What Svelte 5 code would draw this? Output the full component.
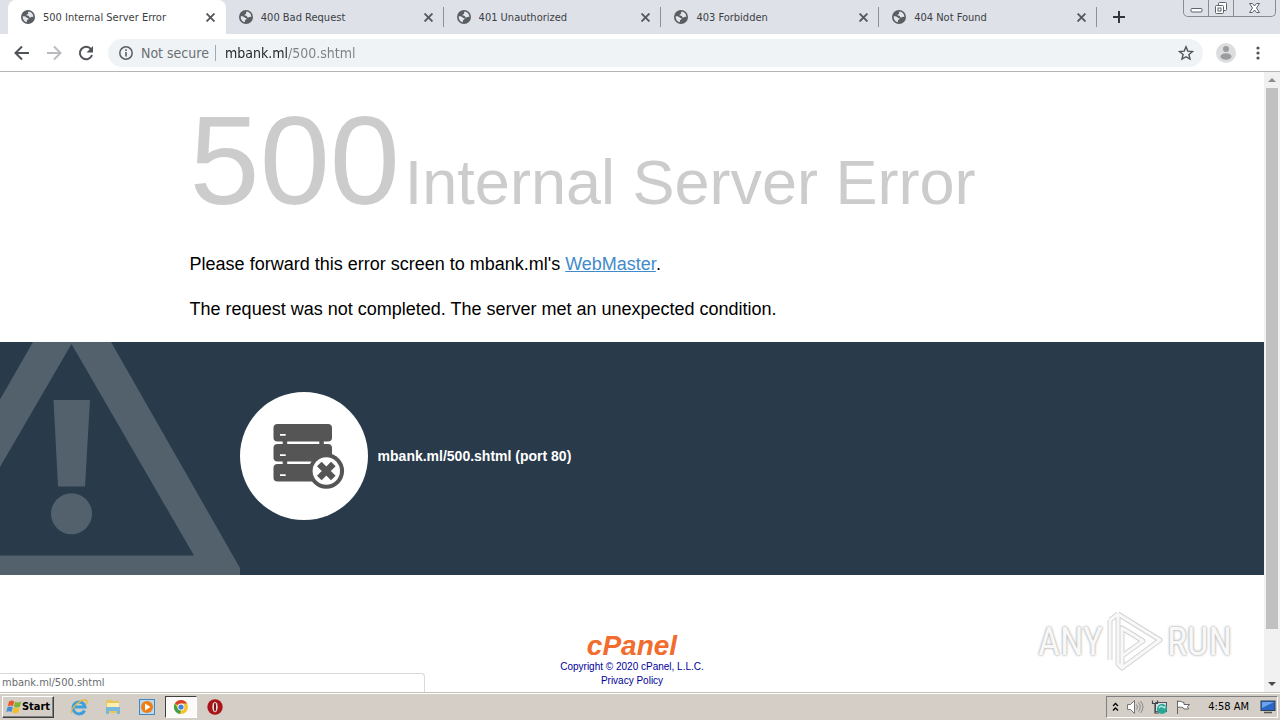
<script lang="ts">
interface Tab {
	title: string;
	active?: boolean;
}

const tabs: Tab[] = [
	{ title: '500 Internal Server Error', active: true },
	{ title: '400 Bad Request' },
	{ title: '401 Unauthorized' },
	{ title: '403 Forbidden' },
	{ title: '404 Not Found' },
];

let url = $state('mbank.ml/500.shtml');
</script>

<div class="desktop">
	<header class="tab-strip">
		<div class="tabs">
			{#each tabs as tab}
				<div class="tab" class:active={tab.active}>
					<svg class="globe" viewBox="0 0 14 14" aria-hidden="true">
						<circle cx="7" cy="7" r="7" fill="#5a5e63" />
						<path d="M8 1.6C6.8 2 6.6 3 7.4 3.5c-.6 1-1.7.6-1.9 1.6.1.9 1.3.7 2.2.8.6.8.3 1.5 1.3 1.6 1 .1 1-.9 2-.8l1.4.4C12.3 4.3 10.5 2 8 1.6z" fill="#e4e6ea" />
						<path d="M1.7 6.2c1.5-.2 3 .2 4 1.3.5.8 1.7.4 2 1.3-.1.9-1.2.8-1.6 1.5-.2.7 0 1.3-.6 1.9C3.3 11.5 1.5 9.3 1.7 6.2z" fill="#e4e6ea" />
					</svg>
					<span class="tab-title">{tab.title}</span>
					<button class="tab-close" aria-label="Close {tab.title}">
						<svg viewBox="0 0 8 8"><path d="M0.5 0.5l7 7M7.5 0.5l-7 7" stroke="#55595e" stroke-width="1.7" /></svg>
					</button>
				</div>
			{/each}
		</div>
		<button class="new-tab" aria-label="New tab">
			<svg viewBox="0 0 12 12"><path d="M6 0v12M0 6h12" stroke="#33363b" stroke-width="2" /></svg>
		</button>
		<div class="window-buttons">
			<button aria-label="Minimize">
				<svg width="13" height="16" viewBox="0 0 13 16"><rect x="1" y="8.5" width="11" height="3.5" rx="1" fill="#fff" stroke="#5d636b" /></svg>
			</button>
			<button aria-label="Restore">
				<svg width="14" height="16" viewBox="0 0 14 16" fill="#fff" stroke="#5d636b">
					<rect x="4.5" y="2.5" width="8" height="8" rx="1" />
					<rect x="1.5" y="5.5" width="8" height="8" rx="1" />
					<rect x="4" y="8" width="3" height="3" />
				</svg>
			</button>
			<button class="wide" aria-label="Close">
				<svg width="13" height="16" viewBox="0 0 13 16"><path d="M1.5 3.5h3l2 2.5 2-2.5h3L8.5 8l3 4.5h-3l-2-2.5-2 2.5h-3L4.5 8z" fill="#fff" stroke="#5d636b" /></svg>
			</button>
		</div>
	</header>

	<div class="toolbar">
		<button class="nav" aria-label="Back">
			<svg viewBox="0 0 16 16"><path d="M15 8H2M8 1.5L1.5 8L8 14.5" fill="none" stroke="#505458" stroke-width="2" /></svg>
		</button>
		<button class="nav" aria-label="Forward" disabled>
			<svg viewBox="0 0 16 16"><path d="M1 8h13M8 1.5L14.5 8L8 14.5" fill="none" stroke="#b9bbbe" stroke-width="2" /></svg>
		</button>
		<button class="nav" aria-label="Reload">
			<svg viewBox="0 0 16 16">
				<path d="M13 4.2A6.2 6.2 0 1 0 14 10" fill="none" stroke="#505458" stroke-width="2" />
				<path d="M15 1v6.5H8.5z" fill="#505458" />
			</svg>
		</button>
		<div class="omnibox">
			<svg class="info" viewBox="0 0 14 14" aria-hidden="true">
				<circle cx="7" cy="7" r="6.2" fill="none" stroke="#5a5e63" stroke-width="1.5" />
				<path d="M7 6v4.5M7 3.3v1.6" stroke="#5a5e63" stroke-width="1.6" />
			</svg>
			<span class="security">Not secure</span>
			<input type="text" aria-label="Address" spellcheck="false" bind:value={url} />
			<button class="star" aria-label="Bookmark this page">
				<svg viewBox="0 0 16 16"><path d="M8 1.8l1.8 4.3 4.7.4-3.6 3 1.1 4.6L8 11.7l-4 2.4 1.1-4.6-3.6-3 4.7-.4z" fill="none" stroke="#505458" stroke-width="1.4" /></svg>
			</button>
		</div>
		<button class="profile" aria-label="Profile">
			<svg viewBox="0 0 20 20">
				<circle cx="10" cy="10" r="10" fill="#dcdddf" />
				<circle cx="10" cy="6" r="3" fill="#9b9c9e" />
				<ellipse cx="10" cy="13.5" rx="5.5" ry="3.2" fill="#9b9c9e" />
			</svg>
		</button>
		<button class="menu" aria-label="Menu">
			<svg viewBox="0 0 4 14" fill="#505458"><circle cx="2" cy="2" r="1.6" /><circle cx="2" cy="7" r="1.6" /><circle cx="2" cy="12" r="1.6" /></svg>
		</button>
	</div>

	<div class="viewport">
		<main class="page">
			<div class="container">
				<h1><span class="code">500</span><span class="reason">Internal Server Error</span></h1>
				<p>Please forward this error screen to mbank.ml's <a href="mailto:webmaster@mbank.ml">WebMaster</a>.</p>
				<p>The request was not completed. The server met an unexpected condition.</p>
			</div>

			<section class="banner">
				<svg class="warning" viewBox="0 0 240 233" fill="#53616d" aria-hidden="true">
					<path d="M33 0H111L240 226V233H0V213.5H194L71.5 2L0 125V57.5z" />
					<path d="M53.5 58H90L85 144.5H58z" />
					<circle cx="71.5" cy="171.7" r="20.5" />
				</svg>
				<div class="container server">
					<svg class="server-icon" viewBox="0 0 128 128" aria-hidden="true">
						<circle cx="64" cy="64" r="64" fill="#fff" />
						<g fill="#555">
							<rect x="33.5" y="32" width="58.5" height="17.5" rx="4" />
							<rect x="33.5" y="52" width="58.5" height="17.5" rx="4" />
							<rect x="33.5" y="72" width="58.5" height="17.5" rx="4" />
							<path d="M42.7 48h4.5v26h-4.5zM79.3 48h4.5v26h-4.5z" />
							<circle cx="86.3" cy="79" r="17.8" />
						</g>
						<path d="M40 42h5.7v1.7H40zM40 62.3h5.7V64H40zM40 82.3h5.7V84H40z" fill="#fff" />
						<circle cx="86.3" cy="79" r="13.7" fill="#fff" />
						<path d="M79.3 72l14 14M93.3 72l-14 14" stroke="#555" stroke-width="6.5" />
					</svg>
					<strong>mbank.ml/500.shtml (port 80)</strong>
				</div>
			</section>

			<footer>
				<a class="logo" href="https://cpanel.com/">cPanel</a>
				<a href="https://cpanel.com/">Copyright © 2020 cPanel, L.L.C.</a>
				<a href="https://cpanel.com/privacy">Privacy Policy</a>
			</footer>
		</main>

		<div class="scrollbar">
			<button aria-label="Scroll up"><svg viewBox="0 0 8 4"><path d="M0 4L4 0L8 4z" fill="#8b8b8b" /></svg></button>
			<div class="track"><div class="thumb"></div></div>
			<button aria-label="Scroll down"><svg viewBox="0 0 8 4"><path d="M0 0h8L4 4z" fill="#4b4b4b" /></svg></button>
		</div>

		<div class="status">mbank.ml/500.shtml</div>

		<div class="watermark">
			<span>ANY</span>
			<svg viewBox="0 0 60 64" aria-hidden="true">
				<g fill="none" stroke-linejoin="round">
					<path d="M13 4L55 30L17 58V46L38 31L17 18V46M13 4V54L17 58M5 10V50M5 10L13 4" stroke="#d4d4d4" stroke-width="5" />
					<path d="M13 4L55 30L17 58V46L38 31L17 18V46M13 4V54L17 58M5 10V50M5 10L13 4" stroke="#f8f8f8" stroke-width="3" />
				</g>
			</svg>
			<span>RUN</span>
		</div>
	</div>

	<nav class="taskbar">
		<button class="start">
			<svg viewBox="0 0 16 16" aria-hidden="true">
				<path d="M3 2.5C5 1 7 1.5 8.2 2.5L7 7.3C5.5 6.3 3.6 6.3 1.8 7.3z" fill="#e8582a" />
				<path d="M9 2.8c1.8 1.2 4 1 6.2-.2L14 7.5c-2 1.2-4 1.2-6 .2z" fill="#7ab536" />
				<path d="M1.5 8.2C3.4 7.2 5.2 7.3 6.8 8.2L5.5 13C4 12 2 12 .3 13z" fill="#3f8ed8" />
				<path d="M7.7 8.6c2 1 4 1 6-.2l-1.3 4.9c-2 1.2-4 1.2-6 .1z" fill="#f6bd28" />
			</svg>
			Start
		</button>
		<div class="launchers">
			<button aria-label="Internet Explorer">
				<svg viewBox="0 0 18 18" fill="none">
					<path d="M14.5 12.5A6 6 0 1 1 15 9H5" stroke="#3d9fdd" stroke-width="3" />
					<path d="M2 15C-1 12 9 2 15 2c3 0 2 3 1 4.5" stroke="#e9b93c" stroke-width="1.3" />
				</svg>
			</button>
			<button aria-label="Windows Explorer">
				<svg viewBox="0 0 18 18">
					<path d="M2 4l1-2h5l1 1h6v12H2z" fill="#e8c65b" />
					<path d="M3 5h12v6H3z" fill="#fbeeb0" />
					<path d="M2 9h14v7h-3v-3H5v3H2z" fill="#79b7dc" />
				</svg>
			</button>
			<button aria-label="Media Player">
				<svg viewBox="0 0 18 18">
					<rect x="1.5" y="1.5" width="15" height="15" fill="#b7d9f2" stroke="#4488c0" />
					<circle cx="9" cy="9" r="6" fill="#ef7d12" />
					<path d="M7 5.5L12.5 9L7 12.5z" fill="#fff" />
				</svg>
			</button>
			<button class="pressed" aria-label="Chrome">
				<svg viewBox="0 0 18 18">
					<circle cx="9" cy="9" r="7" fill="#f3c52b" />
					<path d="M9 9L2.9 5.5A7 7 0 0 1 15.1 5.5H9z" fill="#d9402f" />
					<path d="M2.9 5.5L6 11L9 12l-1 4A7 7 0 0 1 2.9 5.5z" fill="#3f9f4b" />
					<circle cx="9" cy="9" r="3.4" fill="#fff" />
					<circle cx="9" cy="9" r="2.6" fill="#427fdd" />
				</svg>
			</button>
			<button aria-label="Opera">
				<svg viewBox="0 0 18 18">
					<circle cx="9" cy="9" r="7.7" fill="#a81418" />
					<ellipse cx="9" cy="9" rx="2.7" ry="5.3" fill="#e9dcdc" />
					<ellipse cx="9" cy="9" rx="1" ry="4.6" fill="#7c0d10" />
				</svg>
			</button>
		</div>
		<div class="tray">
			<svg width="7" height="10" viewBox="0 0 7 10"><path d="M1 4l2.5-2.5L6 4M1 8.5L3.5 6L6 8.5" fill="none" stroke="#000" stroke-width="1.3" /></svg>
			<svg width="18" height="16" viewBox="0 0 18 16">
				<path d="M1.5 5.5h3l4-4v13l-4-4h-3z" fill="#fff" stroke="#777" />
				<path d="M10.5 5.5q2 2.5 0 5M12.5 3.5q3.5 4.5 0 9M14.5 2q5 6 0 12" fill="none" stroke="#888" />
			</svg>
			<svg width="17" height="16" viewBox="0 0 17 16">
				<rect x="4.5" y="3.5" width="11" height="9" fill="#cfe0e6" stroke="#556" />
				<path d="M1.5 1.5v3h5v-3M4 5v9h4" fill="none" stroke="#444" stroke-width="1.2" />
				<circle cx="11" cy="10" r="5" fill="#28a596" />
				<path d="M8 9q2-3 4-1t2-1" fill="none" stroke="#b5e6da" stroke-width="1.5" />
			</svg>
			<svg width="16" height="16" viewBox="0 0 16 16"><path d="M2.5 15V1.5M3 2.5c3-1 4 1 6 1v2h5.5l-2 2 1 2.5H9L8 8.5c-2 0-3-1-5 0" fill="#fff" stroke="#666" /></svg>
			<time>4:58 AM</time>
			<button aria-label="Show desktop">
				<svg width="16" height="14" viewBox="0 0 16 14">
					<rect x="1" y="1" width="14" height="9.5" fill="#2b66c4" stroke="#26415f" />
					<path d="M2 2h12L2 8z" fill="#6ba4ea" />
					<path d="M4 12.5h8" stroke="#555" stroke-width="1.5" />
				</svg>
			</button>
		</div>
	</nav>
</div>

<style>
:global(body) {
	margin: 0;
}

.desktop {
	display: flex;
	flex-direction: column;
	height: 100vh;
	overflow: hidden;
	background: #fff;
	font-family: "DejaVu Sans Condensed", "DejaVu Sans", sans-serif;
	font-size: 11px;
}

svg {
	display: block;
	flex-shrink: 0;
}

button {
	display: flex;
	align-items: center;
	justify-content: center;
	padding: 0;
	border: 0;
	background: none;
	font: inherit;
}

.tab-strip {
	display: flex;
	flex-shrink: 0;
	height: 34px;
	padding: 0 4px 0 8px;
	background: #dee1e8;
}

.tabs {
	display: flex;
	flex: 0 1 1089px;
	min-width: 0;
}

.tab {
	display: flex;
	flex: 1;
	align-items: center;
	min-width: 0;
	padding: 0 11px 0 13px;
	color: #3c4043;
	background: linear-gradient(#8d9197, #8d9197) right center / 1px 20px no-repeat;
}

.tab.active {
	background: #fff;
	border-radius: 8px 8px 0 0;
}

.globe {
	width: 14px;
	height: 14px;
}

.tab-title {
	flex: 1;
	margin-left: 8px;
	overflow: hidden;
	white-space: nowrap;
}

.tab-close,
.tab-close svg {
	width: 9px;
	height: 9px;
}

.new-tab {
	margin-left: 16px;
}

.new-tab svg {
	width: 12px;
	height: 12px;
}

.window-buttons {
	display: flex;
	height: 16px;
	margin-left: auto;
	border: 1px solid #888d95;
	border-top: 0;
	border-radius: 0 0 5px 5px;
}

.window-buttons button {
	width: 25px;
	border-right: 1px solid #888d95;
}

.window-buttons .wide {
	width: 41px;
	border-right: 0;
}

.toolbar {
	display: flex;
	flex-shrink: 0;
	align-items: center;
	height: 37px;
	padding: 0 20px 0 14px;
	border-bottom: 1px solid #b4b5b4;
}

.nav {
	margin-right: 16px;
}

.nav svg,
.star svg {
	width: 16px;
	height: 16px;
}

.omnibox {
	display: flex;
	flex: 1;
	align-items: center;
	height: 28px;
	margin: 0 13px 0 -2px;
	padding: 0 9px 0 11px;
	border-radius: 14px;
	background: #eff3f6;
	color: #6b6f74;
	font-size: 14px;
}

.info {
	width: 14px;
	height: 14px;
	margin-right: 8px;
}

.security {
	padding-right: 6px;
	border-right: 1px solid #a5a9ad;
	line-height: 16px;
	white-space: nowrap;
}

/* host is dark, path is grey */
input {
	flex: 1;
	min-width: 0;
	padding: 0 0 0 9px;
	border: 0;
	outline: 0;
	background: linear-gradient(to right, #202124 72px, #7c8085 72px);
	background-clip: text;
	color: transparent;
	font: inherit;
}

.profile svg {
	width: 20px;
	height: 20px;
}

.menu {
	margin-left: 20px;
}

.menu svg {
	width: 4px;
	height: 14px;
}

.viewport {
	position: relative;
	display: flex;
	flex: 1;
	min-height: 0;
}

.page {
	flex: 1;
	overflow: hidden;
	font-family: "Liberation Sans", Arial, sans-serif;
}

.container {
	width: 70%;
	margin: 0 auto;
}

h1 {
	display: flex;
	align-items: baseline;
	gap: 5px;
	margin: 0;
	padding-top: 18px;
	color: #ccc;
	font-weight: 400;
	white-space: nowrap;
}

.code {
	font-size: 126px;
	line-height: 142px;
}

.reason {
	font-size: 63px;
	line-height: 72px;
}

p {
	margin: 20px 0;
	font-size: 18px;
	line-height: 25px;
}

p a {
	color: #428bca;
}

.banner {
	position: relative;
	padding: 50px 0 55px;
	background: #293a4a;
	color: #fff;
}

.warning {
	position: absolute;
	top: 0;
	left: 0;
	height: 100%;
}

.server {
	display: flex;
	align-items: center;
	box-sizing: border-box;
	padding-left: 50px;
	gap: 10px;
	font-size: 14px;
}

.server-icon {
	position: relative;
	width: 128px;
}

footer {
	display: flex;
	flex-direction: column;
	align-items: center;
	padding-top: 57px;
	font-size: 10px;
	line-height: 14px;
}

footer a {
	color: #00009c;
	text-decoration: none;
}

footer .logo {
	color: #f26c2e;
	font-size: 28px;
	font-style: italic;
	font-weight: 700;
	line-height: 28px;
}

.scrollbar {
	display: flex;
	flex-direction: column;
	width: 16px;
	background: #f1f1f1;
}

.scrollbar button {
	height: 16px;
}

.scrollbar svg {
	width: 8px;
	height: 4px;
}

.track {
	flex: 1;
	padding: 0 2px;
}

.thumb {
	height: 92%;
	background: #c1c1c1;
}

.status {
	position: absolute;
	bottom: 0;
	left: 0;
	box-sizing: border-box;
	width: 425px;
	height: 19px;
	padding-left: 2px;
	border: 1px solid #d9d9d9;
	border-width: 1px 1px 0 0;
	border-radius: 0 4px 0 0;
	background: #fff;
	color: #6a6d70;
	line-height: 18px;
}

.watermark {
	position: absolute;
	right: 48px;
	bottom: 18px;
	display: flex;
	align-items: center;
	gap: 2px;
	color: #f8f8f8;
	font-family: "Roboto Condensed", "Liberation Sans Narrow", "Liberation Sans", sans-serif;
	font-size: 38px;
	text-shadow: 0 0 2px #aaa, 0 0 3px #bbb;
}

.watermark svg {
	width: 60px;
	height: 64px;
}

.taskbar {
	display: flex;
	flex-shrink: 0;
	align-items: center;
	height: 27px;
	padding: 0 2px;
	border-top: 1px solid #c4c0ba;
	box-shadow: inset 0 1px #fff;
	background: #d5cec6;
}

.start {
	width: 52px;
	height: 22px;
	border: 1px solid;
	border-color: #fff #404040 #404040 #fff;
	box-shadow: inset -1px -1px #808080;
	font-weight: 700;
}

.start svg {
	width: 16px;
	height: 16px;
}

.launchers {
	display: flex;
	gap: 2px;
	margin-left: 9px;
}

.launchers button {
	box-sizing: border-box;
	width: 32px;
	height: 22px;
}

.launchers svg {
	width: 18px;
	height: 18px;
}

.launchers .pressed {
	border: 1px solid;
	border-color: #404040 #fff #fff #404040;
	background: #fbfaf9;
}

.tray {
	display: flex;
	align-items: center;
	box-sizing: border-box;
	height: 22px;
	margin-left: auto;
	padding: 0 1px 0 5px;
	gap: 7px;
	border: 1px solid;
	border-color: #808080 #fff #fff #808080;
}

time {
	margin: 0 4px 0 10px;
	white-space: nowrap;
}
</style>
